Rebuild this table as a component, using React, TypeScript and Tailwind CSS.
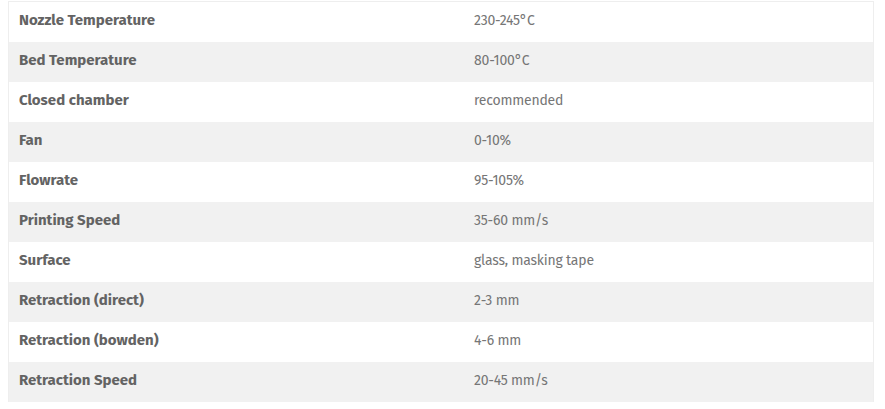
import React from "react";

const rows: [string, string][] = [
  ["Nozzle Temperature", "230-245°C"],
  ["Bed Temperature", "80-100°C"],
  ["Closed chamber", "recommended"],
  ["Fan", "0-10%"],
  ["Flowrate", "95-105%"],
  ["Printing Speed", "35-60 mm/s"],
  ["Surface", "glass, masking tape"],
  ["Retraction (direct)", "2-3 mm"],
  ["Retraction (bowden)", "4-6 mm"],
  ["Retraction Speed", "20-45 mm/s"],
];

export default function App() {
  return (
    <div className="w-[885px] h-[409px] bg-white pl-[8px] pt-[1px]" style={{ fontFamily: '"Fira Sans", "Liberation Sans", Arial, sans-serif' }}>
      <div className="w-[866px] border border-[#eeeeee] border-b-0">
        {rows.map(([k, v], i) => (
          <div key={k} className={`flex h-[40px] items-center pb-[3px] ${i % 2 === 1 ? "bg-[#f1f1f1]" : "bg-white"}`}>
            <div className="w-[455px] pl-[10px] text-[15px] font-bold text-[#636363]">{k}</div>
            <div className="pl-[10px] text-[14px] tracking-[-0.2px] text-[#767676]">{v}</div>
          </div>
        ))}
      </div>
    </div>
  );
}
